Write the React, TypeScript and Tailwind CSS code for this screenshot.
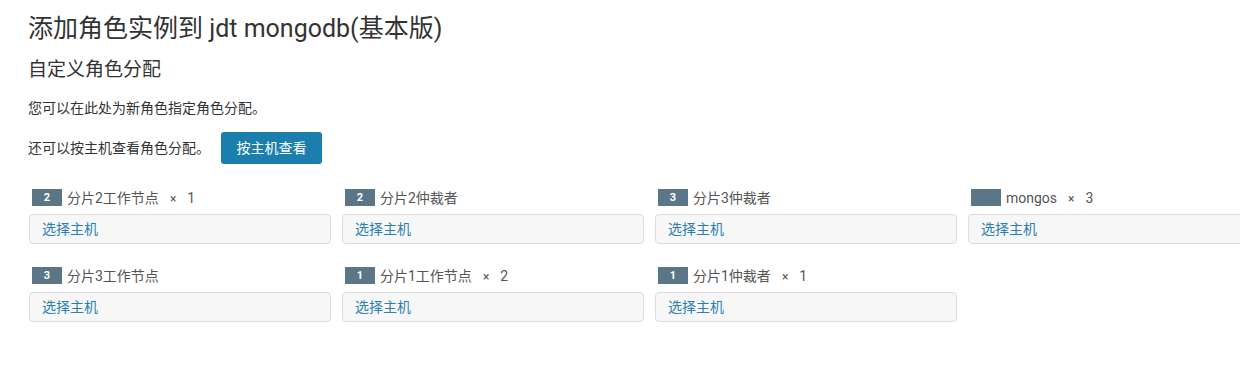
import React from "react";

type Item = { badge: string; label: string; count?: string };

const rows: Item[][] = [
  [
    { badge: "2", label: "分片2工作节点", count: "1" },
    { badge: "2", label: "分片2仲裁者" },
    { badge: "3", label: "分片3仲裁者" },
    { badge: "", label: "mongos", count: "3" },
  ],
  [
    { badge: "3", label: "分片3工作节点" },
    { badge: "1", label: "分片1工作节点", count: "2" },
    { badge: "1", label: "分片1仲裁者", count: "1" },
  ],
];

function Cell({ item }: { item: Item }) {
  return (
    <div className="flex flex-col">
      <div className="flex h-[18px] items-center pl-[3px]">
        <span className="flex h-[17px] w-[30px] items-center justify-center bg-[#5b7687] text-[11px] font-bold leading-none text-white">
          {item.badge}
        </span>
        <span className="ml-[5px] pt-[2px] text-[14px] text-[#555]">{item.label}</span>
        {item.count && (
          <span className="ml-[11px] pt-[2px] text-[14px] text-[#555]">
            <span className="text-[12px]">×</span>
            <span className="ml-[11px]">{item.count}</span>
          </span>
        )}
      </div>
      <div className="mt-[8px] flex h-[30px] items-center rounded-[4px] border border-[#dcdcdc] bg-[#f7f7f7] pl-[12px] text-[14px] text-[#2a80b2]">
        选择主机
      </div>
    </div>
  );
}

export default function App() {
  return (
    <div
      className="h-[385px] w-[1240px] overflow-hidden bg-white pl-[28px] pt-[13px] text-[#333]"
      style={{ fontFamily: "Roboto, 'Noto Sans CJK SC', sans-serif" }}
    >
      <h1 className="text-[25px] leading-[32px] text-[#333]">添加角色实例到 jdt mongodb(基本版)</h1>
      <h2 className="mt-[13px] text-[19px] leading-[24px] text-[#333]">自定义角色分配</h2>
      <p className="mt-[16px] text-[14px] leading-[20px] text-[#333]">您可以在此处为新角色指定角色分配。</p>
      <div className="mt-[14px] flex items-center">
        <span className="text-[14px] text-[#333]">还可以按主机查看角色分配。</span>
        <button className="ml-[11px] h-[32px] w-[101px] rounded-[3px] bg-[#1a7fac] text-[14px] text-white">
          按主机查看
        </button>
      </div>
      <div className="mt-[24px] flex flex-col gap-y-[22px]">
        {rows.map((row, i) => (
          <div key={i} className="grid w-[1300px] grid-cols-[repeat(4,302px)] gap-x-[11px] pl-[1px]">
            {row.map((item, j) => (
              <Cell key={j} item={item} />
            ))}
          </div>
        ))}
      </div>
    </div>
  );
}
